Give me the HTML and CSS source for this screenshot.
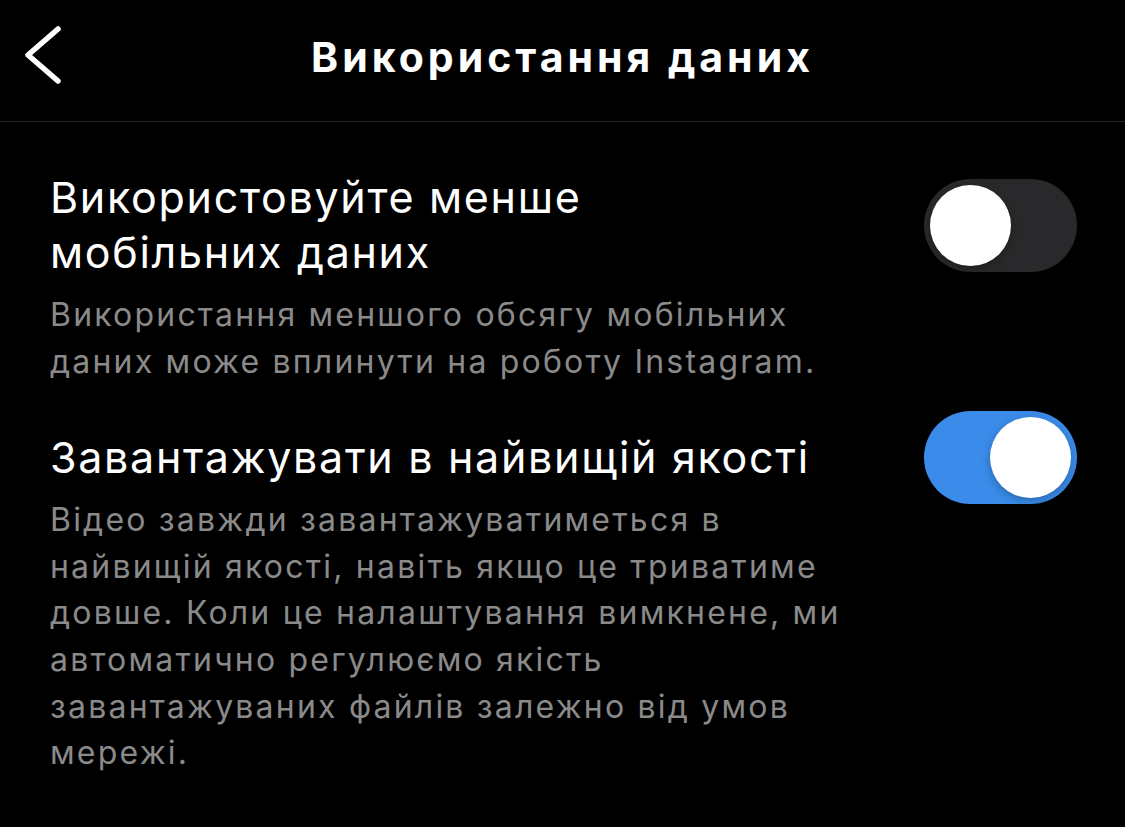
FILE: index.html
```html
<!DOCTYPE html>
<html>
  <head>
    <title>Використання даних</title>
    <link rel="stylesheet" href="styles.css">
  </head>
  <body>
    <header class="topbar">
      <button class="back" aria-label="Назад">
        <svg width="40" height="60" viewBox="0 0 40 60">
          <path d="M36 4 L6 30 L36 56" fill="none" stroke="#fff" stroke-width="5.5" stroke-linecap="round" stroke-linejoin="round"/>
        </svg>
      </button>
      <h1 class="title">Використання даних</h1>
    </header>

    <main class="settings">
      <section class="setting">
        <div class="setting-row">
          <div class="setting-title">Використовуйте менше мобільних даних</div>
          <span class="toggle"><span class="knob"></span></span>
        </div>
        <p class="setting-desc">Використання меншого обсягу мобільних даних може вплинути на роботу Instagram.</p>
      </section>

      <section class="setting">
        <div class="setting-row">
          <div class="setting-title">Завантажувати в найвищій якості</div>
          <span class="toggle on"><span class="knob"></span></span>
        </div>
        <p class="setting-desc">Відео завжди завантажуватиметься в найвищій якості, навіть якщо це триватиме довше. Коли це налаштування вимкнене, ми автоматично регулюємо якість завантажуваних файлів залежно від умов мережі.</p>
      </section>
    </main>
  </body>
</html>
```

FILE: styles.css
```css
body {
  margin: 0;
  background: #000;
  color: #fff;
  font-family: Inter, "Noto Sans", sans-serif;
}
.topbar {
  position: relative;
  box-sizing: border-box;
  height: 122px;
  padding-bottom: 8px;
  border-bottom: 1px solid #262626;
  display: flex;
  align-items: center;
  justify-content: center;
}
.back {
  position: absolute;
  left: 22px;
  top: 25px;
  padding: 0;
  background: none;
  border: none;
}
.back svg {
  display: block;
}
.title {
  margin: 0;
  font-size: 41px;
  font-weight: 700;
  letter-spacing: 4px;
}
.settings {
  padding: 48px 48px 0 50px;
}
.setting {
  margin-bottom: 45px;
}
.setting-row {
  display: flex;
  align-items: center;
  justify-content: space-between;
}
.setting-title {
  width: 766px;
  font-size: 43px;
  line-height: 55px;
  letter-spacing: 1.7px;
}
.setting-desc {
  width: 820px;
  margin: 12px 0 0;
  font-size: 32px;
  line-height: 46.6px;
  color: #8a8a8a;
  letter-spacing: 2.2px;
}
/* switch sits over the text rows, so it adds no height */
.toggle {
  position: relative;
  width: 153px;
  height: 93px;
  margin: -19px 0;
  border-radius: 47px;
  background: #29292b;
  flex-shrink: 0;
}
.toggle .knob {
  position: absolute;
  top: 6px;
  left: 6px;
  width: 81px;
  height: 81px;
  border-radius: 50%;
  background: #fff;
  box-shadow: 0 3px 8px rgba(0, 0, 0, 0.25);
}
.toggle.on {
  background: #3a8bea;
}
.toggle.on .knob {
  left: auto;
  right: 6px;
}
```
